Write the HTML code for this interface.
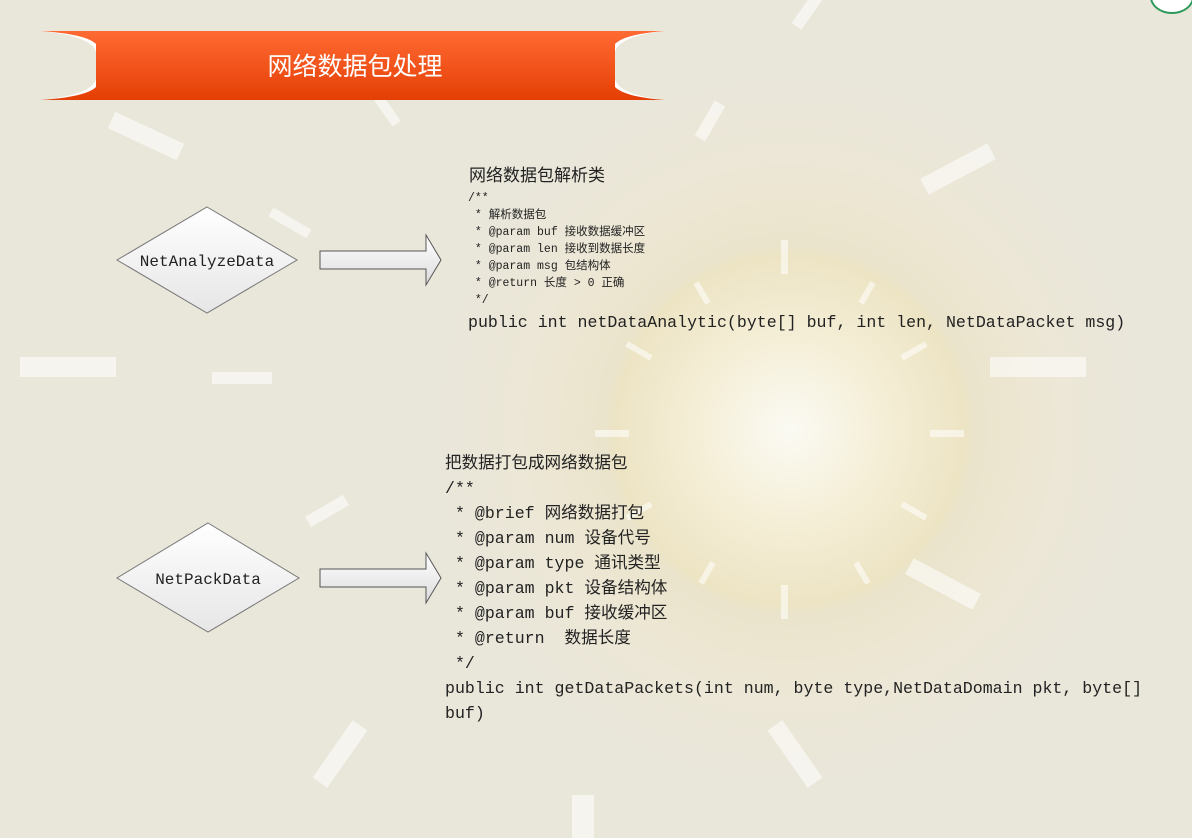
<!DOCTYPE html>
<html><head><meta charset="utf-8"><style>
body{margin:0;width:1192px;height:838px;overflow:hidden;background:#e9e6da;position:relative;font-family:"Liberation Mono","Noto Sans CJK SC",monospace;color:#222}
.glow{position:absolute;left:430px;top:70px;width:720px;height:720px;border-radius:50%;background:radial-gradient(circle at 50% 50%,#fbfaf3 0,#f5efd8 90px,#ede4c4 175px,#ebe4cc 185px,#ece7d6 270px,#e9e6da 360px)}
.r{position:absolute;background:rgba(255,255,255,.55)}
.t{position:absolute;white-space:pre;font-size:16.6px;line-height:25px}
.s{position:absolute;white-space:pre;font-size:11.5px;line-height:17px}
</style></head><body>
<div class="glow"></div>
<div class="r" style="left:20px;top:357px;width:96px;height:20px"></div>
<div class="r" style="left:212px;top:372px;width:60px;height:12px"></div>
<div class="r" style="left:990px;top:357px;width:96px;height:20px"></div>
<div class="r" style="left:930px;top:430px;width:34px;height:7px"></div>
<div class="r" style="left:595px;top:430px;width:34px;height:7px"></div>
<div class="r" style="left:781px;top:240px;width:7px;height:34px"></div>
<div class="r" style="left:781px;top:585px;width:7px;height:34px"></div>
<div class="r" style="left:572px;top:795px;width:22px;height:43px"></div>
<div class="r" style="left:108px;top:127px;width:76px;height:18px;transform:rotate(25deg)"></div>
<div class="r" style="left:920px;top:160px;width:76px;height:18px;transform:rotate(-28deg)"></div>
<div class="r" style="left:905px;top:575px;width:76px;height:18px;transform:rotate(28deg)"></div>
<div class="r" style="left:305px;top:505px;width:44px;height:12px;transform:rotate(-30deg)"></div>
<div class="r" style="left:305px;top:745px;width:70px;height:18px;transform:rotate(-55deg)"></div>
<div class="r" style="left:760px;top:745px;width:70px;height:18px;transform:rotate(55deg)"></div>
<div class="r" style="left:690px;top:115px;width:40px;height:12px;transform:rotate(-60deg)"></div>
<div class="r" style="left:370px;top:105px;width:34px;height:10px;transform:rotate(55deg)"></div>
<div class="r" style="left:788px;top:4px;width:40px;height:12px;transform:rotate(-55deg)"></div>
<div class="r" style="left:268px;top:218px;width:44px;height:10px;transform:rotate(30deg)"></div>
<div class="r" style="left:900px;top:348px;width:28px;height:6px;transform:rotate(-30deg)"></div>
<div class="r" style="left:900px;top:508px;width:28px;height:6px;transform:rotate(30deg)"></div>
<div class="r" style="left:625px;top:508px;width:28px;height:6px;transform:rotate(-30deg)"></div>
<div class="r" style="left:625px;top:348px;width:28px;height:6px;transform:rotate(30deg)"></div>
<div class="r" style="left:855px;top:290px;width:24px;height:6px;transform:rotate(-60deg)"></div>
<div class="r" style="left:695px;top:570px;width:24px;height:6px;transform:rotate(-60deg)"></div>
<div class="r" style="left:850px;top:570px;width:24px;height:6px;transform:rotate(60deg)"></div>
<div class="r" style="left:690px;top:290px;width:24px;height:6px;transform:rotate(60deg)"></div>
<div style="position:absolute;left:1150px;top:-20px;width:40px;height:30px;border-radius:50%;background:#fff;border:2px solid #2b9a5a"></div>

<svg style="position:absolute;left:0;top:0" width="1192" height="838">
<defs><linearGradient id="o" x1="0" y1="0" x2="0" y2="1"><stop offset="0" stop-color="#ff6a33"/><stop offset="1" stop-color="#e43f05"/></linearGradient>
<linearGradient id="d" x1="0" y1="0" x2="0" y2="1"><stop offset="0" stop-color="#fff"/><stop offset="1" stop-color="#e6e6e6"/></linearGradient>
<linearGradient id="a" x1="0" y1="0" x2="0" y2="1"><stop offset="0" stop-color="#fff"/><stop offset="1" stop-color="#dcdcdc"/></linearGradient></defs>
<path d="M40 31 Q92 36 96 52 L96 31Z M40 100 Q92 95 96 79 L96 100Z M665 31 Q619 36 615 52 L615 31Z M665 100 Q619 95 615 79 L615 100Z" fill="#fff"/>
<path d="M40 31 L665 31 Q625 34 615 44 L615 87 Q625 97 665 100 L40 100 Q86 97 96 87 L96 44 Q86 34 40 31Z" fill="url(#o)"/>
<text x="355" y="75" font-size="25" fill="#fff" text-anchor="middle" font-family="Liberation Sans,Noto Sans CJK SC,sans-serif">网络数据包处理</text>
<polygon points="207,207 297,260 207,313 117,260" fill="url(#d)" stroke="#777"/>
<polygon points="208,523 299,578 208,632 117,578" fill="url(#d)" stroke="#777"/>
<text x="207" y="266" font-size="16" text-anchor="middle" font-family="Liberation Mono,monospace" fill="#222">NetAnalyzeData</text>
<text x="208" y="584" font-size="16" text-anchor="middle" font-family="Liberation Mono,monospace" fill="#222">NetPackData</text>
<path d="M320 251 L426 251 L426 235 L441 260 L426 285 L426 269 L320 269Z" fill="url(#a)" stroke="#555"/>
<path d="M320 569 L426 569 L426 553 L441 578 L426 603 L426 587 L320 587Z" fill="url(#a)" stroke="#555"/>
</svg>

<div class="t" style="left:469px;top:165px;font-size:17px">网络数据包解析类</div>
<div class="s" style="left:468px;top:190px">/**
 * 解析数据包
 * @param buf 接收数据缓冲区
 * @param len 接收到数据长度
 * @param msg 包结构体
 * @return 长度 &gt; 0 正确
 */</div>
<div class="t" style="left:468px;top:310px">public int netDataAnalytic(byte[] buf, int len, NetDataPacket msg)</div>
<div class="t" style="left:445px;top:451px">把数据打包成网络数据包
/**
 * @brief 网络数据打包
 * @param num 设备代号
 * @param type 通讯类型
 * @param pkt 设备结构体
 * @param buf 接收缓冲区
 * @return  数据长度
 */
public int getDataPackets(int num, byte type,NetDataDomain pkt, byte[]
buf)</div>
</body></html>
